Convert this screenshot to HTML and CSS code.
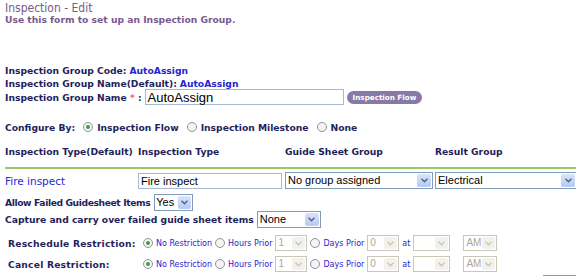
FILE: index.html
```html
<!DOCTYPE html>
<html lang="en">

<head>
    <meta charset="UTF-8">
    <title>Inspection - Edit</title>
    <link rel="stylesheet" href="styles.css">
</head>

<body>
    <h1 class="title">Inspection - Edit</h1>
    <p class="intro">Use this form to set up an Inspection Group.</p>

    <div class="info">
        <div class="info-row"><span class="label">Inspection Group Code:</span> <span class="value">AutoAssign</span></div>
        <div class="info-row"><span class="label">Inspection Group Name(Default):</span> <span class="value">AutoAssign</span></div>
        <div class="name-row">
            <span class="label">Inspection Group Name <span class="req">*</span> :</span>
            <span class="text-input name-input">AutoAssign</span>
            <span class="pill">Inspection Flow</span>
        </div>
    </div>

    <div class="configure">
        <span class="label">Configure By:</span>
        <span class="radio checked"></span><span class="label">Inspection Flow</span>
        <span class="radio"></span><span class="label">Inspection Milestone</span>
        <span class="radio"></span><span class="label">None</span>
    </div>

    <div class="type-grid type-head">
        <span class="label">Inspection Type(Default)</span>
        <span class="label">Inspection Type</span>
        <span class="label">Guide Sheet Group</span>
        <span class="label">Result Group</span>
    </div>
    <div class="type-grid type-row">
        <span class="type-name">Fire inspect</span>
        <span class="text-input type-input">Fire inspect</span>
        <span class="select wide"><span class="select-text">No group assigned</span><span class="arrow"><svg width="7" height="5" viewBox="0 0 7 5"><path d="M0.5 0.8 L3.5 3.8 L6.5 0.8" fill="none" stroke="#4d6185" stroke-width="1.4"/></svg></span></span>
        <span class="select wide"><span class="select-text">Electrical</span><span class="arrow"><svg width="7" height="5" viewBox="0 0 7 5"><path d="M0.5 0.8 L3.5 3.8 L6.5 0.8" fill="none" stroke="#4d6185" stroke-width="1.4"/></svg></span></span>
    </div>

    <div class="option-row allow-row">
        <span class="label tight-label">Allow Failed Guidesheet Items</span>
        <span class="select yes-select"><span class="select-text">Yes</span><span class="arrow"><svg width="7" height="5" viewBox="0 0 7 5"><path d="M0.5 0.8 L3.5 3.8 L6.5 0.8" fill="none" stroke="#4d6185" stroke-width="1.4"/></svg></span></span>
    </div>
    <div class="option-row capture-row">
        <span class="label">Capture and carry over failed guide sheet items</span>
        <span class="select none-select"><span class="select-text">None</span><span class="arrow"><svg width="7" height="5" viewBox="0 0 7 5"><path d="M0.5 0.8 L3.5 3.8 L6.5 0.8" fill="none" stroke="#4d6185" stroke-width="1.4"/></svg></span></span>
    </div>

    <div class="restriction">
        <span class="label wide-label">Reschedule Restriction:</span>
        <div class="restriction-opts">
            <span class="radio checked"></span><span class="opt">No Restriction</span>
            <span class="radio"></span><span class="opt">Hours Prior</span>
            <span class="select disabled num-select"><span class="select-text">1</span><span class="arrow"><svg width="7" height="5" viewBox="0 0 7 5"><path d="M0.5 0.8 L3.5 3.8 L6.5 0.8" fill="none" stroke="#c9c7ba" stroke-width="1.4"/></svg></span></span>
            <span class="radio"></span><span class="opt">Days Prior</span>
            <span class="select disabled num-select"><span class="select-text">0</span><span class="arrow"><svg width="7" height="5" viewBox="0 0 7 5"><path d="M0.5 0.8 L3.5 3.8 L6.5 0.8" fill="none" stroke="#c9c7ba" stroke-width="1.4"/></svg></span></span>
            <span class="opt">at</span>
            <span class="select disabled time-select"><span class="select-text"></span><span class="arrow"><svg width="7" height="5" viewBox="0 0 7 5"><path d="M0.5 0.8 L3.5 3.8 L6.5 0.8" fill="none" stroke="#c9c7ba" stroke-width="1.4"/></svg></span></span>
            <span class="select disabled ampm-select"><span class="select-text">AM</span><span class="arrow"><svg width="7" height="5" viewBox="0 0 7 5"><path d="M0.5 0.8 L3.5 3.8 L6.5 0.8" fill="none" stroke="#c9c7ba" stroke-width="1.4"/></svg></span></span>
        </div>
    </div>
    <div class="restriction">
        <span class="label wide-label">Cancel Restriction:</span>
        <div class="restriction-opts">
            <span class="radio checked"></span><span class="opt">No Restriction</span>
            <span class="radio"></span><span class="opt">Hours Prior</span>
            <span class="select disabled num-select"><span class="select-text">1</span><span class="arrow"><svg width="7" height="5" viewBox="0 0 7 5"><path d="M0.5 0.8 L3.5 3.8 L6.5 0.8" fill="none" stroke="#c9c7ba" stroke-width="1.4"/></svg></span></span>
            <span class="radio"></span><span class="opt">Days Prior</span>
            <span class="select disabled num-select"><span class="select-text">0</span><span class="arrow"><svg width="7" height="5" viewBox="0 0 7 5"><path d="M0.5 0.8 L3.5 3.8 L6.5 0.8" fill="none" stroke="#c9c7ba" stroke-width="1.4"/></svg></span></span>
            <span class="opt">at</span>
            <span class="select disabled time-select"><span class="select-text"></span><span class="arrow"><svg width="7" height="5" viewBox="0 0 7 5"><path d="M0.5 0.8 L3.5 3.8 L6.5 0.8" fill="none" stroke="#c9c7ba" stroke-width="1.4"/></svg></span></span>
            <span class="select disabled ampm-select"><span class="select-text">AM</span><span class="arrow"><svg width="7" height="5" viewBox="0 0 7 5"><path d="M0.5 0.8 L3.5 3.8 L6.5 0.8" fill="none" stroke="#c9c7ba" stroke-width="1.4"/></svg></span></span>
        </div>
    </div>
    <div class="next-box"></div>
</body>

</html>
```

FILE: styles.css
```css
body {
    margin: 0;
    padding: 2px 0 0 5px;
    font-family: "DejaVu Sans", Verdana, sans-serif;
    color: #1f1f5c;
    overflow: hidden;
    height: 277px;
    box-sizing: border-box;
}
.title {
    margin: 0;
    font-family: "DejaVu Sans Condensed", "DejaVu Sans", sans-serif;
    font-size: 12px;
    font-weight: normal;
    line-height: 13px;
    color: #7a5a8c;
}
.intro {
    margin: 0;
    font-size: 9.2px;
    font-weight: bold;
    line-height: 10px;
    color: #7a5a8c;
}
.label {
    font-size: 9.2px;
    font-weight: bold;
    color: #1f1f5c;
    white-space: nowrap;
}
.wide-label {
    letter-spacing: 0.2px;
}
.tight-label {
    letter-spacing: -0.4px;
}
.value {
    font-size: 9.2px;
    font-weight: bold;
    color: #2626cc;
}
.req {
    color: #ff6060;
}
.info {
    margin-top: 39px;
}
.info-row {
    font-size: 9.2px;
    line-height: 13px;
    height: 13px;
}
.name-row {
    display: flex;
    align-items: center;
    gap: 3px;
    margin-top: -1px;
}
.text-input {
    display: inline-flex;
    align-items: center;
    box-sizing: border-box;
    border: 1px solid #a5b9d1;
    background: #fff;
    font-family: "Liberation Sans", Arial, sans-serif;
    color: #000;
    padding-left: 2px;
}
.name-input {
    width: 199px;
    height: 16px;
    font-size: 13px;
}
.pill {
    height: 13px;
    padding: 0 6px;
    border-radius: 7px;
    background: #887aa6;
    color: #fff;
    font-size: 7.2px;
    font-weight: bold;
    line-height: 13px;
}
.configure {
    display: flex;
    align-items: center;
    gap: 4px;
    height: 12px;
    margin-top: 16px;
}
.configure .radio {
    margin-left: 4px;
}
.radio {
    display: inline-block;
    flex: none;
    width: 10px;
    height: 10px;
    box-sizing: border-box;
    border: 1px solid #8d94a6;
    border-radius: 50%;
    background: #f4f4f0;
    position: relative;
}
.radio.checked::after {
    content: "";
    position: absolute;
    left: 2px;
    top: 2px;
    width: 4px;
    height: 4px;
    border-radius: 50%;
    background: #3fa040;
}
.type-grid {
    display: grid;
    grid-template-columns: 133px 147px 150px 141px;
    align-items: center;
}
.type-head {
    height: 12px;
    margin-top: 12px;
    padding-bottom: 10px;
    border-bottom: 2px solid #99c866;
}
.type-row {
    margin-top: 3px;
    height: 17px;
}
.type-name {
    font-size: 10.5px;
    color: #2626d6;
}
.type-input {
    width: 144px;
    height: 16px;
    font-size: 11px;
}
.select {
    display: inline-flex;
    align-items: stretch;
    box-sizing: border-box;
    border: 1px solid #7f9db9;
    background: #fff;
    font-family: "Liberation Sans", Arial, sans-serif;
    font-size: 11px;
    color: #000;
    height: 17px;
}
.select-text {
    flex: 1;
    padding-left: 2px;
    line-height: 15px;
    white-space: nowrap;
    overflow: hidden;
}
.arrow {
    flex: none;
    width: 14px;
    margin: 1px;
    display: flex;
    align-items: center;
    justify-content: center;
    background: linear-gradient(#d9e4fb, #b7c9f3);
    border-radius: 2px;
}
.wide {
    width: 148px;
}
.type-row .select + .select {
    width: 142px;
}
.option-row {
    display: flex;
    align-items: center;
    gap: 3px;
    height: 17px;
}
.allow-row {
    margin-top: 5px;
}
.yes-select {
    width: 39px;
    margin-left: 1px;
}
.yes-select .select-text {
    padding-left: 1px;
}
.yes-select .arrow {
    width: 13px;
}
.none-select {
    width: 64px;
}
.restriction {
    display: grid;
    grid-template-columns: 135px 1fr;
    align-items: center;
    height: 16px;
    margin-top: 7px;
    padding-left: 3px;
}
.restriction + .restriction {
    margin-top: 5px;
}
.restriction-opts {
    display: flex;
    align-items: center;
    gap: 3px;
}
.opt {
    font-size: 8px;
    color: #2626cc;
    white-space: nowrap;
}
.select.disabled {
    border-color: #c9c7ba;
    color: #aca899;
    font-size: 10px;
    height: 16px;
}
.select.disabled .select-text {
    line-height: 14px;
}
.select.disabled .arrow {
    width: 13px;
    background: #f2f1ec;
}
.num-select {
    width: 32px;
}
.time-select {
    width: 37px;
}
.ampm-select {
    width: 34px;
    margin-left: 10px;
}
.next-box {
    margin: 3px 0 0 538px;
    width: 40px;
    border-top: 1px solid #7f9db9;
}
```
